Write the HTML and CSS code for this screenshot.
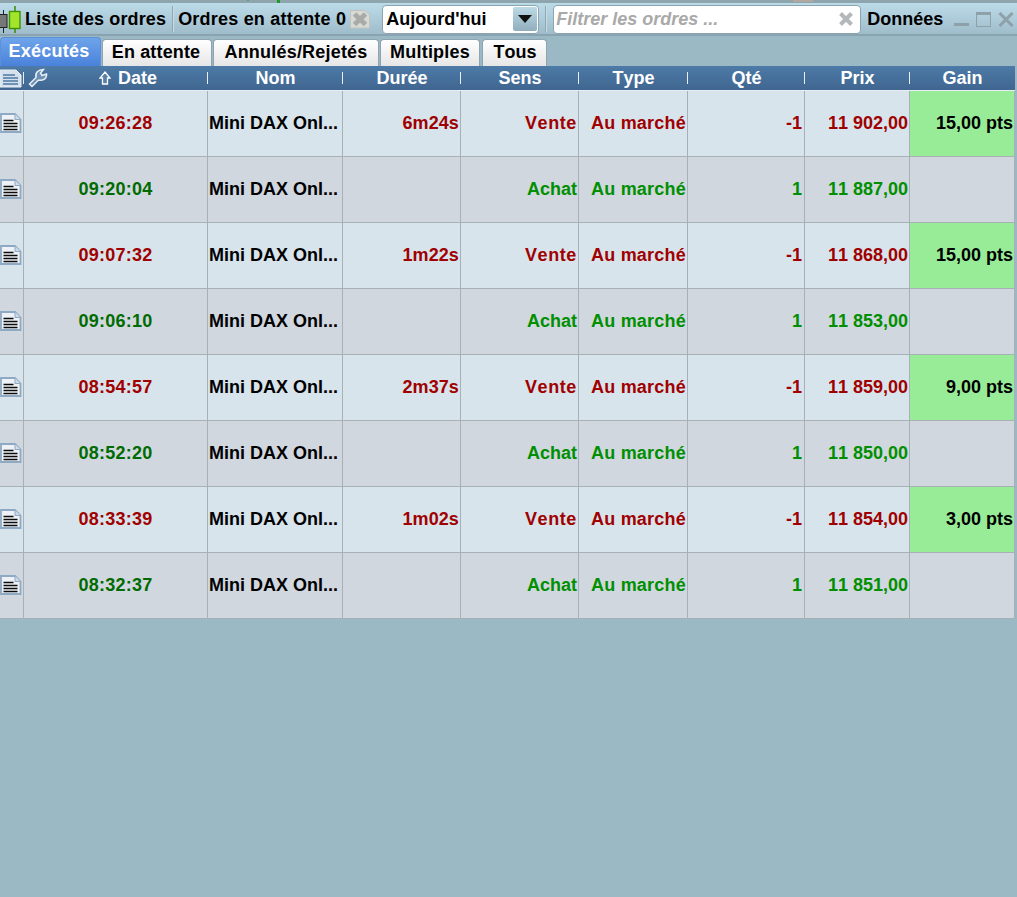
FILE: index.html
```html
<!DOCTYPE html>
<html lang="fr">
<head>
<meta charset="utf-8">
<title>Liste des ordres</title>
<link rel="stylesheet" href="styles.css">
</head>
<body>
<svg class="sprite" width="0" height="0">
  <symbol id="doc" viewBox="0 0 22 20">
    <path d="M1 1h14l5.500 5.500V19H1z" fill="#eef2f6" stroke="#8ea9c4" stroke-width="1.800"/>
    <path d="M15 1v5.500h5.500" fill="#cfdbe6" stroke="#8ea9c4"/>
    <path d="M3.500 7.500h10M3.500 10.500h14M3.500 13.500h14M3.500 16.500h14" stroke="#0c0c0c" stroke-width="1.600"/>
  </symbol>
</svg>
<div class="app">
  <div class="strip"><span class="mark-a"></span><span class="mark-b"></span><span class="mark-c"></span></div>
  <div class="toolbar">
    <svg class="candles" width="22" height="28" viewBox="0 0 22 28">
      <path d="M3.500 5v23" stroke="#222" fill="none"/>
      <rect x="-1" y="9.500" width="8" height="13" fill="#777" stroke="#222"/>
      <path d="M15 1v27" stroke="#3a8a00" stroke-width="1.500" fill="none"/>
      <rect x="9.500" y="6.500" width="10.500" height="17" fill="#a4e52c" stroke="#3f9300" stroke-width="1.400"/>
    </svg>
    <span class="tb-label tb-title">Liste des ordres</span>
    <span class="tb-sep"></span>
    <span class="tb-label tb-pending">Ordres en attente 0</span>
    <svg class="tb-disabled" width="20" height="20" viewBox="0 0 20 20">
      <path d="M0.500 1.500h14.500l4.500 4.500v13H0.500z" fill="#dadad5" stroke="#bfc2bd"/>
      <path d="M4.500 5l11 10.500M15.500 5L4.500 15.500" stroke="#a9aba8" stroke-width="5"/>
    </svg>
    <span class="select">
      <span>Aujourd'hui</span>
      <span class="select-btn"><svg width="14" height="8" viewBox="0 0 14 8"><path d="M0 0h14L7 8z" fill="#111"/></svg></span>
    </span>
    <span class="tb-sep tb-sep-2"></span>
    <span class="filter">
      <span class="filter-text">Filtrer les ordres ...</span>
      <svg width="16" height="16" viewBox="0 0 16 16"><path d="M2.500 2.500l11 11M13.500 2.500l-11 11" stroke="#b4b8ba" stroke-width="4"/></svg>
    </span>
    <span class="tb-label tb-data">Données</span>
    <span class="win-btns">
      <svg width="15" height="15" viewBox="0 0 15 15"><path d="M0 12.500h15" stroke="#8ea1ab" stroke-width="3"/></svg>
      <svg width="15" height="15" viewBox="0 0 15 15"><rect x=".5" y="1.500" width="14" height="13" fill="none" stroke="#8ea1ab"/><path d="M0 1.500h15" stroke="#8ea1ab" stroke-width="3"/></svg>
      <svg width="16" height="15" viewBox="0 0 16 15"><path d="M1.500 1l13 13M14.500 1l-13 13" stroke="#8ea1ab" stroke-width="3"/></svg>
    </span>
  </div>

  <div class="tabs">
    <span class="tab tab-active">Exécutés</span>
    <span class="tab tab-2">En attente</span>
    <span class="tab tab-3">Annulés/Rejetés</span>
    <span class="tab tab-4">Multiples</span>
    <span class="tab tab-5">Tous</span>
  </div>

  <div class="grid head">
    <div class="h h-icon"><svg class="doc" width="22" height="19" viewBox="0 0 22 19"><path d="M0 1h16l5 5v12H0z" fill="#d4e1ec" stroke="#e9eff5"/><path d="M3 6h12M3 9h15M3 12h15M3 15h15" stroke="#4d7aa5" stroke-width="1.400"/></svg></div>
    <div class="h h-date"><svg class="wrench" width="20" height="20" viewBox="0 0 20 20"><path d="M1.500 16L8 9.500C7 5 10 1.500 15.500 1.500L12.500 5L14 7.500L18.500 6C19 10.500 15 13 10.500 12L4 18.500z" fill="#6d8fb3" stroke="#e6edf4" stroke-width="1.500"/></svg><span class="date-label"><svg class="arrow" width="12" height="14" viewBox="0 0 12 14"><path d="M6 1L11 7H8.500V13H3.500V7H1z" fill="#5a80a8" stroke="#fff" stroke-width="1.300"/></svg>Date</span></div>
    <div class="h">Nom</div>
    <div class="h">Durée</div>
    <div class="h">Sens</div>
    <div class="h">Type</div>
    <div class="h">Qté</div>
    <div class="h">Prix</div>
    <div class="h h-last">Gain</div>
  </div>

  <div class="grid row sell">
    <div class="c c-icon"><svg class="doc" width="22" height="20"><use href="#doc"/></svg></div>
    <div class="c center">09:26:28</div><div class="c name">Mini DAX Onl...</div><div class="c right dur">6m24s</div><div class="c right vente">Vente</div><div class="c right mkt">Au marché</div><div class="c right qty">-1</div><div class="c right">11 902,00</div><div class="c gain">15,00 pts</div>
  </div>
  <div class="grid row buy">
    <div class="c c-icon"><svg class="doc" width="22" height="20"><use href="#doc"/></svg></div>
    <div class="c center">09:20:04</div><div class="c name">Mini DAX Onl...</div><div class="c right"></div><div class="c right">Achat</div><div class="c right mkt">Au marché</div><div class="c right qty">1</div><div class="c right">11 887,00</div><div class="c nogain"></div>
  </div>
  <div class="grid row sell">
    <div class="c c-icon"><svg class="doc" width="22" height="20"><use href="#doc"/></svg></div>
    <div class="c center">09:07:32</div><div class="c name">Mini DAX Onl...</div><div class="c right dur">1m22s</div><div class="c right vente">Vente</div><div class="c right mkt">Au marché</div><div class="c right qty">-1</div><div class="c right">11 868,00</div><div class="c gain">15,00 pts</div>
  </div>
  <div class="grid row buy">
    <div class="c c-icon"><svg class="doc" width="22" height="20"><use href="#doc"/></svg></div>
    <div class="c center">09:06:10</div><div class="c name">Mini DAX Onl...</div><div class="c right"></div><div class="c right">Achat</div><div class="c right mkt">Au marché</div><div class="c right qty">1</div><div class="c right">11 853,00</div><div class="c nogain"></div>
  </div>
  <div class="grid row sell">
    <div class="c c-icon"><svg class="doc" width="22" height="20"><use href="#doc"/></svg></div>
    <div class="c center">08:54:57</div><div class="c name">Mini DAX Onl...</div><div class="c right dur">2m37s</div><div class="c right vente">Vente</div><div class="c right mkt">Au marché</div><div class="c right qty">-1</div><div class="c right">11 859,00</div><div class="c gain">9,00 pts</div>
  </div>
  <div class="grid row buy">
    <div class="c c-icon"><svg class="doc" width="22" height="20"><use href="#doc"/></svg></div>
    <div class="c center">08:52:20</div><div class="c name">Mini DAX Onl...</div><div class="c right"></div><div class="c right">Achat</div><div class="c right mkt">Au marché</div><div class="c right qty">1</div><div class="c right">11 850,00</div><div class="c nogain"></div>
  </div>
  <div class="grid row sell">
    <div class="c c-icon"><svg class="doc" width="22" height="20"><use href="#doc"/></svg></div>
    <div class="c center">08:33:39</div><div class="c name">Mini DAX Onl...</div><div class="c right dur">1m02s</div><div class="c right vente">Vente</div><div class="c right mkt">Au marché</div><div class="c right qty">-1</div><div class="c right">11 854,00</div><div class="c gain">3,00 pts</div>
  </div>
  <div class="grid row buy">
    <div class="c c-icon"><svg class="doc" width="22" height="20"><use href="#doc"/></svg></div>
    <div class="c center">08:32:37</div><div class="c name">Mini DAX Onl...</div><div class="c right"></div><div class="c right">Achat</div><div class="c right mkt">Au marché</div><div class="c right qty">1</div><div class="c right">11 851,00</div><div class="c nogain"></div>
  </div>
</div>
</body>
</html>
```
FILE: styles.css
```css
* { box-sizing: border-box; }
html, body { margin: 0; padding: 0; height: 100%; }
body {
  background: #9bb8c5;
  font-family: "Liberation Sans", Arial, sans-serif;
  font-weight: bold;
  font-size: 18px;
  font-kerning: none;
  color: #000;
  overflow: hidden;
}
.sprite { display: block; height: 0; }
.app { width: 1017px; height: 897px; overflow: hidden; }

.strip {
  height: 3px;
  display: flex;
  align-items: flex-start;
  background: #8fa5ae;
}
.mark-a { margin-left: 247px; width: 2px; height: 1px; background: #5aa080; }
.mark-b { margin-left: 28px; width: 3px; height: 3px; background: #1f9a2b; }
.mark-c { margin-left: 513px; width: 20px; height: 2px; background: #b3a89e; }

.toolbar {
  height: 33px;
  display: flex;
  align-items: center;
  border-bottom: 2px solid #8aa3b0;
  background: linear-gradient(#bcdbe8, #9fbcca);
  padding-top: 1px;
  white-space: nowrap;
}
.candles { flex: none; }
.tb-label { line-height: 29px; }
.tb-title { margin-left: 3px; letter-spacing: 0.13px; }
.tb-pending { letter-spacing: 0.21px; }
.tb-sep {
  flex: none;
  width: 2px;
  height: 26px;
  margin: 0 4px 0 6px;
  background: #8fa7b3;
  border-right: 1px solid #c8dce5;
}
.tb-disabled { margin-left: 4px; flex: none; }
.select {
  flex: none;
  display: flex;
  align-items: center;
  justify-content: space-between;
  width: 157px;
  height: 29px;
  margin-left: 12px;
  padding: 0 1px 0 3px;
  background: #fff;
  border: 1px solid #8ba4b0;
  border-radius: 4px;
}
.select-btn {
  display: flex;
  align-items: center;
  justify-content: center;
  width: 24px;
  height: 24px;
  background: linear-gradient(#bcd9e6, #90aebc);
  border-radius: 2px;
}
.tb-sep-2 { margin: 0 6px; }
.filter {
  flex: none;
  display: flex;
  align-items: center;
  justify-content: space-between;
  width: 308px;
  height: 29px;
  padding: 0 6px 0 2px;
  background: #fff;
  border: 1px solid #8ba4b0;
  border-radius: 4px;
}
.filter-text { color: #a9a9a9; font-style: italic; }
.tb-data { margin-left: 6px; }
.win-btns {
  flex: none;
  display: flex;
  align-items: center;
  gap: 7px;
  margin-left: 11px;
}

.tabs {
  height: 30px;
  display: flex;
  align-items: flex-end;
}
.tab {
  display: flex;
  align-items: center;
  justify-content: center;
  height: 27px;
  padding-bottom: 1px;
  letter-spacing: 0.15px;
  background: linear-gradient(#fff, #e6e6e6);
  border: 1px solid #8ea4b0;
  border-bottom: none;
  border-radius: 4px 4px 0 0;
}
.tab-active {
  width: 101px;
  height: 29px;
  padding: 0 3px 1px 0;
  letter-spacing: 0.25px;
  color: #fff;
  background: linear-gradient(#6ea4ea, #4a82dc);
  border-color: #5d8fd6;
}
.tab-2 { width: 110px; margin-left: 1px; padding-right: 2px; }
.tab-3 { width: 166px; margin-left: 1px; letter-spacing: 0.2px; }
.tab-4 { width: 100px; margin-left: 1px; letter-spacing: 0.2px; }
.tab-5 { width: 65px; margin-left: 2px; padding-left: 1px; letter-spacing: 0; }

.grid {
  display: grid;
  grid-template-columns: 24px 184px 135px 118px 118px 109px 117px 105px 105px;
  width: 1015px;
}
.head {
  height: 25px;
  background: linear-gradient(#4d7aa7, #3f6690);
  color: #fff;
  border-bottom: 1px solid #e8eef3;
}
.h {
  position: relative;
  display: flex;
  align-items: center;
  justify-content: center;
  min-width: 0;
}
.h::after {
  content: "";
  position: absolute;
  right: 0;
  top: 6px;
  height: 12px;
  width: 1px;
  background: #e8eef3;
}
.h-last::after { display: none; }
.h-icon { justify-content: flex-start; }
.h-date { justify-content: flex-start; padding-left: 4px; }
.wrench { flex: none; }
.date-label { display: flex; align-items: center; gap: 7px; margin-left: 51px; }
.doc { flex: none; }

.row { height: 66px; }
.sell { background: #d7e4ec; color: #a00000; }
.buy { background: #d1d7df; color: #008f00; }
.c {
  display: flex;
  align-items: center;
  min-width: 0;
  padding: 0 1px 1px 1px;
  border-right: 1px solid #a7b0b5;
  border-bottom: 1px solid #a7b0b5;
  white-space: nowrap;
}
.c-icon { padding: 0 0 2px; justify-content: flex-start; }
.center { justify-content: center; letter-spacing: 0.25px; }
.buy .center { color: #006b00; }
.right { justify-content: flex-end; }
.dur { letter-spacing: 0.1px; }
.vente { letter-spacing: 0.6px; }
.mkt { letter-spacing: 0.22px; }
.qty { padding-right: 2px; }
.name { color: #000; }
.gain { background: #98ec98; color: #000; justify-content: flex-end; }
.nogain { background: #d1d7df; }
```
